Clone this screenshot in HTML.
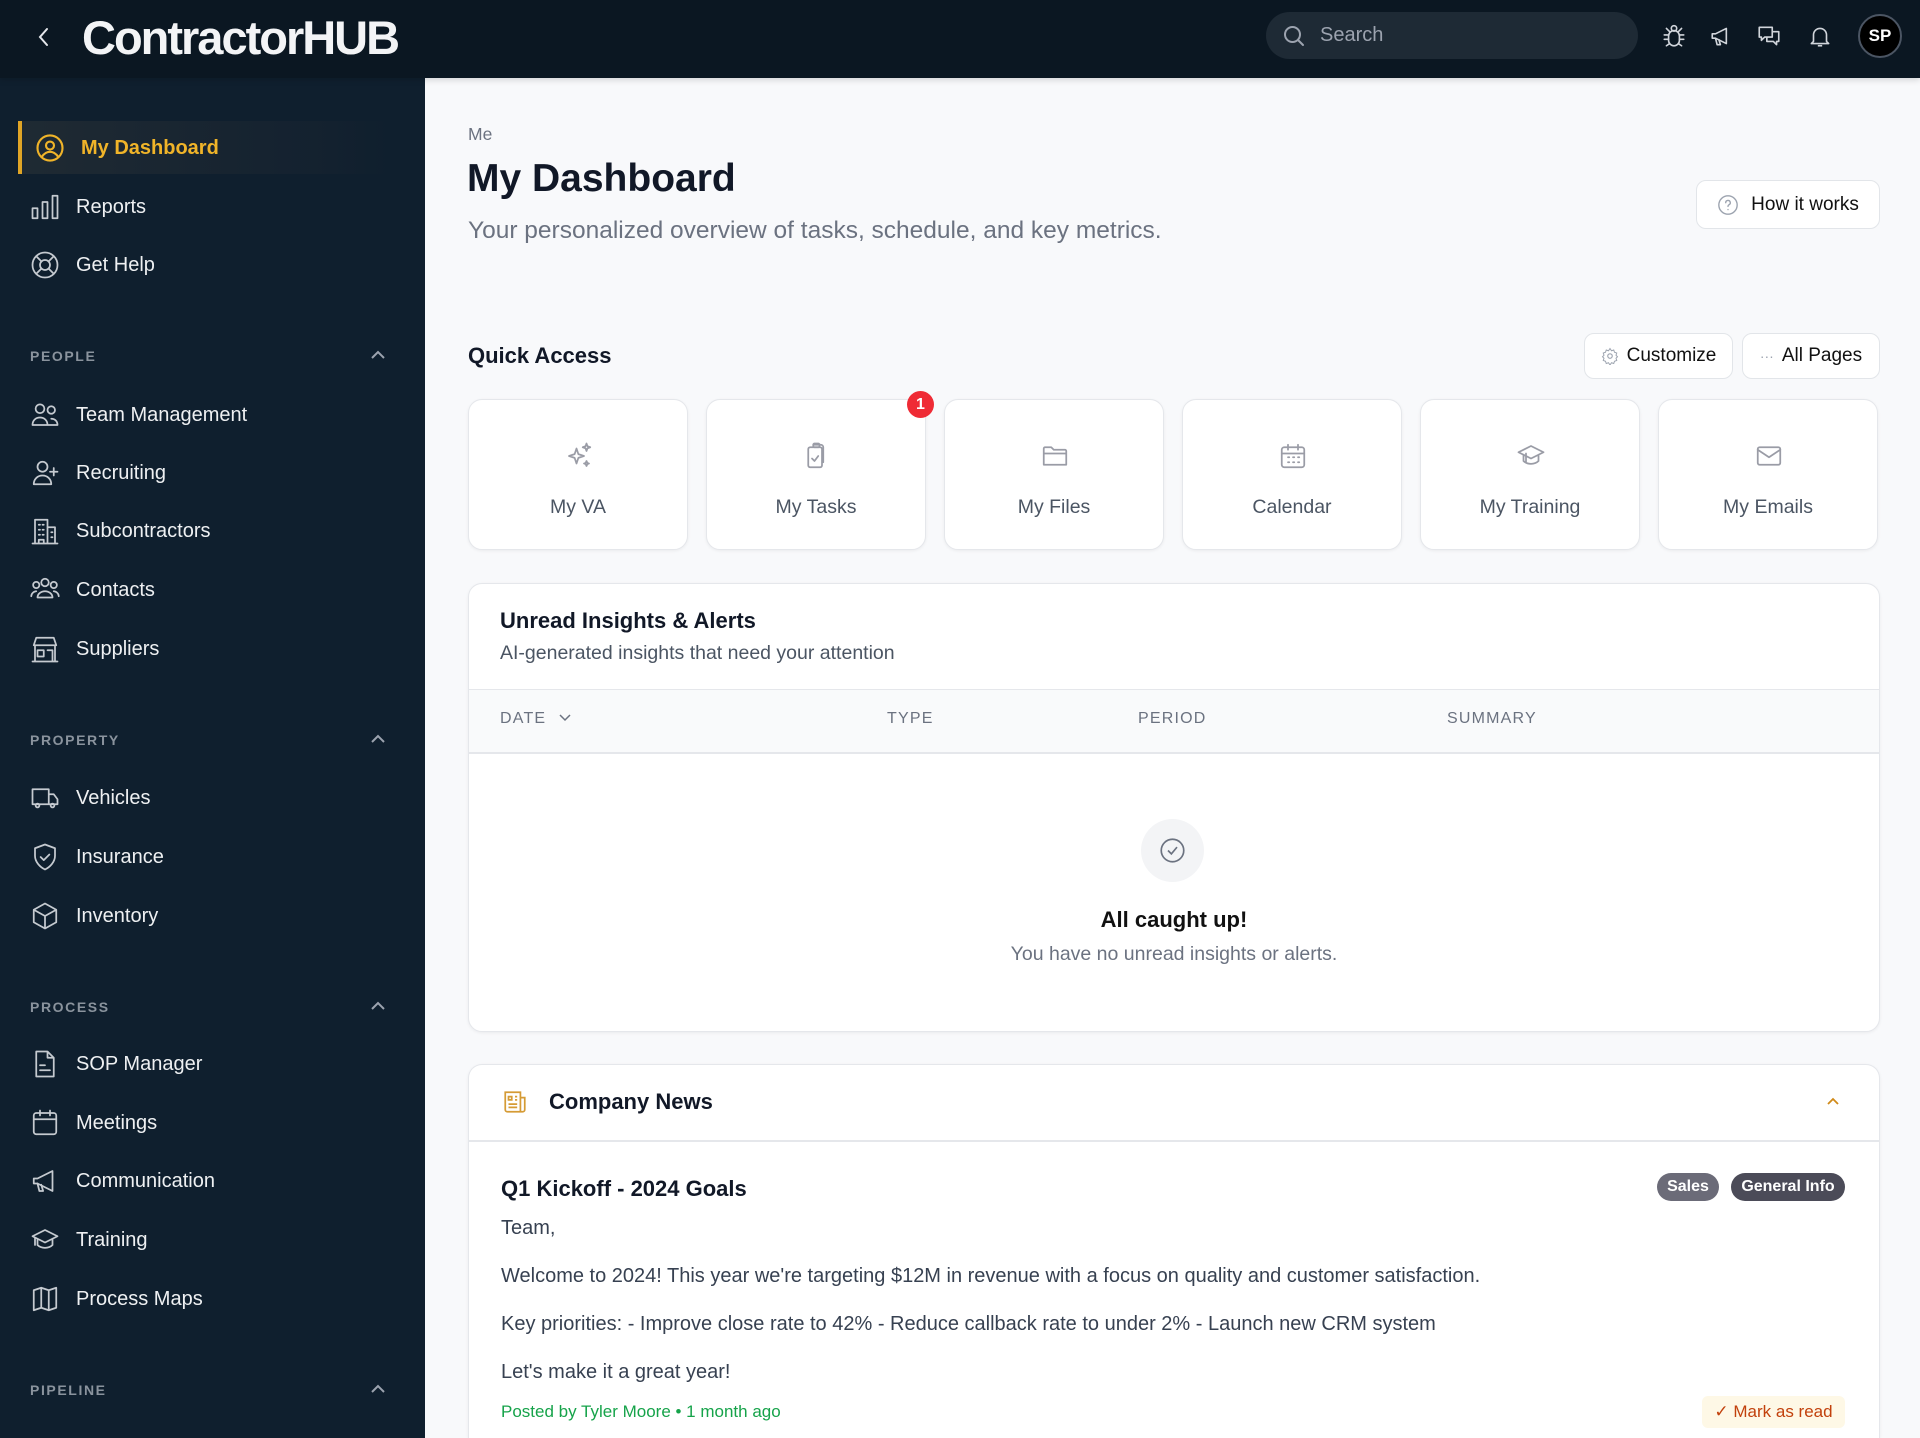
<!DOCTYPE html>
<html style="width:1920px;height:1438px;overflow:hidden"><head><meta charset="utf-8"><style>
*{box-sizing:border-box;margin:0;padding:0}
body{width:1920px;height:1438px;overflow:hidden;background:#f8f9fb;font-family:"Liberation Sans",sans-serif;position:relative;color:#111827}
.a{position:absolute}
.hdr{left:0;top:0;width:1920px;height:78px;background:#0b1722;box-shadow:0 2px 6px rgba(0,0,0,.15);z-index:2}
.side{left:0;top:78px;width:425px;height:1360px;background:#0f1f2e}
.it{position:absolute;left:30px;height:40px;display:flex;align-items:center;color:#eef0f2;font-size:20px}
.it svg{width:30px;height:30px;margin-right:16px;fill:none;stroke:#c5cad0;stroke-width:1.4;stroke-linecap:round;stroke-linejoin:round}
.sec{position:absolute;left:30px;color:#8a939d;font-size:14px;letter-spacing:1.6px;font-weight:bold}
.chev{position:absolute;left:370px;width:16px;height:10px}
.btn{position:absolute;background:#fff;border:1px solid #e2e5e9;border-radius:10px;display:flex;align-items:center;justify-content:center;font-size:19px;color:#111}
.card{position:absolute;background:#fff;border:1px solid #e5e7eb;border-radius:14px;box-shadow:0 1px 3px rgba(0,0,0,.06)}
.qa{position:absolute;top:399px;width:220px;height:151px}
.qa svg{position:absolute;left:95px;top:41px;width:30px;height:30px;fill:none;stroke:#9a9ca6;stroke-width:1.4;stroke-linecap:round;stroke-linejoin:round}
.qa span{position:absolute;left:0;right:0;top:96px;text-align:center;font-size:19.5px;color:#4b5563}
.th{position:absolute;top:710px;font-size:16px;color:#6b7280;letter-spacing:1.2px}
.p{position:absolute;left:501px;font-size:20px;color:#374151}
.tag{position:absolute;top:1173px;height:28px;border-radius:14px;color:#fff;font-size:16px;display:flex;align-items:center;justify-content:center;font-weight:bold}
</style></head><body>
<div class="a hdr">
 <svg class="a" style="left:36px;top:26px" width="16" height="22" viewBox="0 0 16 22"><path d="M11 3 L4 11 L11 19" fill="none" stroke="#e5e7eb" stroke-width="2" stroke-linecap="round"/></svg>
 <div class="a" style="left:82px;top:9px;font-size:47px;font-weight:bold;color:#f3f4f6;letter-spacing:-2px;line-height:58px">Contractor<span style="letter-spacing:-2px">HUB</span></div>
 <div class="a" style="left:1266px;top:12px;width:372px;height:47px;border-radius:24px;background:#1e2a35">
  <svg class="a" style="left:16px;top:12px" width="24" height="24" viewBox="0 0 24 24"><circle cx="10.5" cy="10.5" r="7.5" fill="none" stroke="#9ca3af" stroke-width="2"/><path d="M16 16l5 5" stroke="#9ca3af" stroke-width="2" stroke-linecap="round"/></svg>
  <span class="a" style="left:54px;top:12px;font-size:20px;color:#9ca3af">Search</span>
 </div>
 <svg class="a" style="left:1661px;top:23px" width="26" height="26" viewBox="0 0 24 24" fill="none" stroke="#d1d5db" stroke-width="1.5" stroke-linecap="round"><rect x="7" y="7" width="10" height="14" rx="5"/><circle cx="12" cy="5" r="2.5"/><path d="M7 11H3M17 11h4M7 15H3M17 15h4M8 19l-3 2M16 19l3 2M8 8 5 5M16 8l3-3"/></svg>
 <svg class="a" style="left:1709px;top:23px" width="26" height="26" viewBox="0 0 24 24" fill="none" stroke="#d1d5db" stroke-width="1.5" stroke-linejoin="round"><path d="M3 10v4h3l10 5V5L6 10H3z"/><path d="M6 14l1.5 6h3L9 15"/></svg>
 <svg class="a" style="left:1756px;top:23px" width="26" height="26" viewBox="0 0 24 24" fill="none" stroke="#d1d5db" stroke-width="1.5" stroke-linejoin="round"><path d="M3 4h12v9H8l-3 3v-3H3z"/><path d="M15 8h6v9h-2v3l-3-3h-6v-4"/></svg>
 <svg class="a" style="left:1807px;top:23px" width="26" height="26" viewBox="0 0 24 24" fill="none" stroke="#d1d5db" stroke-width="1.5" stroke-linejoin="round"><path d="M6 17V11a6 6 0 0 1 12 0v6l2 2H4z"/><path d="M10 21h4"/></svg>
 <div class="a" style="left:1858px;top:14px;width:44px;height:44px;border-radius:50%;background:#000;border:2px solid #4b5563;color:#fff;font-weight:bold;font-size:17px;display:flex;align-items:center;justify-content:center">SP</div>
</div>

<div class="a side"></div>
<div class="a" style="left:18px;top:121px;width:370px;height:53px;background:linear-gradient(90deg,#1f2a33,#13212f 85%,#0f1f2e);border-left:4px solid #e0a526"></div>
<div class="it" style="top:128px;left:35px;color:#f0b429;font-weight:bold"><svg viewBox="0 0 24 24" style="stroke:#f0b429;stroke-width:1.7"><circle cx="12" cy="12" r="10"/><circle cx="12" cy="10" r="3.2"/><path d="M5.5 19c2-3 4-4 6.5-4s4.5 1 6.5 4"/></svg>My Dashboard</div>
<div class="it" style="top:187px"><svg viewBox="0 0 24 24"><rect x="2" y="13" width="4" height="8"/><rect x="10" y="8" width="4" height="13"/><rect x="18" y="3" width="4" height="18"/></svg>Reports</div>
<div class="it" style="top:245px"><svg viewBox="0 0 24 24"><circle cx="12" cy="12" r="10"/><circle cx="12" cy="12" r="4"/><path d="M5 5l4 4M19 5l-4 4M5 19l4-4M19 19l-4-4"/></svg>Get Help</div>

<div class="sec" style="top:348px">PEOPLE</div><svg class="chev" style="top:350px" viewBox="0 0 16 10"><path d="M2 8l6-6 6 6" fill="none" stroke="#9ca3af" stroke-width="2"/></svg>
<div class="it" style="top:395px"><svg viewBox="0 0 24 24"><circle cx="8" cy="7" r="3.5"/><circle cx="17" cy="8" r="3"/><path d="M2 20c0-4 3-6 6-6s6 2 6 6zM14 20h8c0-3-2-5-5-5"/></svg>Team Management</div>
<div class="it" style="top:453px"><svg viewBox="0 0 24 24"><circle cx="10" cy="7" r="4"/><path d="M3 21c0-4 3-7 7-7s7 3 7 7zM19 8v6M16 11h6"/></svg>Recruiting</div>
<div class="it" style="top:511px"><svg viewBox="0 0 24 24"><path d="M2 22h20M4 22V3h10v19M14 9h6v13M7 7h1M10 7h1M7 11h1M10 11h1M7 15h1M10 15h1M17 13h1M17 17h1M7 22v-3h4v3"/></svg>Subcontractors</div>
<div class="it" style="top:570px"><svg viewBox="0 0 24 24"><circle cx="12" cy="6" r="3"/><circle cx="5" cy="8" r="2.5"/><circle cx="19" cy="8" r="2.5"/><path d="M6 18c0-3 3-5 6-5s6 2 6 5zM1 17c0-2 2-4 4-4M23 17c0-2-2-4-4-4"/></svg>Contacts</div>
<div class="it" style="top:629px"><svg viewBox="0 0 24 24"><path d="M3 9l2-6h14l2 6zM4 9v13h16V9M2 22h20M6 13h5v5H6zM14 13h4v9"/></svg>Suppliers</div>

<div class="sec" style="top:732px">PROPERTY</div><svg class="chev" style="top:734px" viewBox="0 0 16 10"><path d="M2 8l6-6 6 6" fill="none" stroke="#9ca3af" stroke-width="2"/></svg>
<div class="it" style="top:778px"><svg viewBox="0 0 24 24"><path d="M2 5h13v12H2zM15 9h4l3 4v4h-7"/><circle cx="6" cy="18" r="1.5"/><circle cx="18" cy="18" r="1.5"/></svg>Vehicles</div>
<div class="it" style="top:837px"><svg viewBox="0 0 24 24"><path d="M12 2l8 3v6c0 5-4 9-8 11-4-2-8-6-8-11V5z"/><path d="M8.5 12l2.5 2.5 4.5-4.5"/></svg>Insurance</div>
<div class="it" style="top:896px"><svg viewBox="0 0 24 24"><path d="M12 2l9 5v10l-9 5-9-5V7zM3 7l9 5 9-5M12 12v10"/></svg>Inventory</div>

<div class="sec" style="top:999px">PROCESS</div><svg class="chev" style="top:1001px" viewBox="0 0 16 10"><path d="M2 8l6-6 6 6" fill="none" stroke="#9ca3af" stroke-width="2"/></svg>
<div class="it" style="top:1044px"><svg viewBox="0 0 24 24"><path d="M5 2h9l5 5v15H5zM14 2v5h5M8 17h8M8 13h4"/></svg>SOP Manager</div>
<div class="it" style="top:1103px"><svg viewBox="0 0 24 24"><rect x="3" y="4" width="18" height="17" rx="2"/><path d="M3 9h18M8 2v4M16 2v4"/></svg>Meetings</div>
<div class="it" style="top:1161px"><svg viewBox="0 0 24 24"><path d="M3 10v4h3l12 6V4L6 10H3z"/><path d="M6 14l1.5 6h3L9 15"/></svg>Communication</div>
<div class="it" style="top:1220px"><svg viewBox="0 0 24 24"><path d="M12 4l10 5-10 5-10-5zM6 11v5c3 3 9 3 12 0v-5M4 10v6"/></svg>Training</div>
<div class="it" style="top:1279px"><svg viewBox="0 0 24 24"><path d="M3 5l6-2 6 2 6-2v16l-6 2-6-2-6 2zM9 3v16M15 5v16"/></svg>Process Maps</div>

<div class="sec" style="top:1382px">PIPELINE</div><svg class="chev" style="top:1384px" viewBox="0 0 16 10"><path d="M2 8l6-6 6 6" fill="none" stroke="#9ca3af" stroke-width="2"/></svg>

<!-- main -->
<div class="a" style="left:468px;top:124px;font-size:17.5px;color:#6b7280">Me</div>
<div class="a" style="left:467px;top:157px;font-size:39px;font-weight:bold;color:#111827">My Dashboard</div>
<div class="a" style="left:468px;top:217px;font-size:24.5px;color:#6b7280">Your personalized overview of tasks, schedule, and key metrics.</div>
<div class="btn" style="left:1696px;top:180px;width:184px;height:49px"><svg width="22" height="22" viewBox="0 0 24 24" style="margin-right:12px"><circle cx="12" cy="12" r="10" fill="none" stroke="#9ca3af" stroke-width="1.5"/><path d="M9.5 9.5a2.5 2.5 0 1 1 3.5 2.3c-.7.4-1 1-1 1.7M12 17h.01" fill="none" stroke="#9ca3af" stroke-width="1.5" stroke-linecap="round"/></svg>How it works</div>

<div class="a" style="left:468px;top:343px;font-size:22px;font-weight:bold">Quick Access</div>
<div class="btn" style="left:1584px;top:333px;width:149px;height:46px;font-size:19px"><svg width="18" height="18" viewBox="0 0 24 24" style="margin-right:8px"><circle cx="12" cy="12" r="3" fill="none" stroke="#9ca3af" stroke-width="1.5"/><path d="M12 2l2 3 3-1 1 3 3 1-1 3 2 2-2 2 1 3-3 1-1 3-3-1-2 3-2-3-3 1-1-3-3-1 1-3-2-2 2-2-1-3 3-1 1-3 3 1z" fill="none" stroke="#9ca3af" stroke-width="1.3"/></svg>Customize</div>
<div class="btn" style="left:1742px;top:333px;width:138px;height:46px;font-size:19px"><span style="color:#9ca3af;margin-right:8px;font-size:14px">···</span>All Pages</div>

<div class="card qa" style="left:468px"><svg viewBox="0 0 24 24"><path d="M10 6l1.5 4.5L16 12l-4.5 1.5L10 18l-1.5-4.5L4 12l4.5-1.5zM18 2l.8 2.2L21 5l-2.2.8L18 8l-.8-2.2L15 5l2.2-.8zM18 16l.6 1.4L20 18l-1.4.6L18 20l-.6-1.4L16 18l1.4-.6z"/></svg><span>My VA</span></div>
<div class="card qa" style="left:706px"><svg viewBox="0 0 24 24"><rect x="5" y="5" width="11" height="16" rx="1.5"/><path d="M9 3h6a2 2 0 0 1 2 2v12"/><rect x="9" y="2" width="5" height="3" rx="1"/><path d="M8 14l2 2 3-4"/></svg><span>My Tasks</span></div>
<div class="a" style="left:907px;top:391px;width:27px;height:27px;border-radius:50%;background:#ef2b35;color:#fff;font-size:16px;font-weight:bold;display:flex;align-items:center;justify-content:center;z-index:3">1</div>
<div class="card qa" style="left:944px"><svg viewBox="0 0 24 24"><path d="M3 6a1 1 0 0 1 1-1h5l2 2h9a1 1 0 0 1 1 1v11H3zM3 10h18"/></svg><span>My Files</span></div>
<div class="card qa" style="left:1182px"><svg viewBox="0 0 24 24"><rect x="3" y="5" width="18" height="16" rx="2"/><path d="M3 10h18M8 3v4M16 3v4M8 13h1M12 13h1M16 13h1M8 17h1M12 17h1M16 17h1"/></svg><span>Calendar</span></div>
<div class="card qa" style="left:1420px"><svg viewBox="0 0 24 24"><path d="M12 4l10 5-10 5-10-5zM6 11v5c3 3 9 3 12 0v-5M8 10v7"/></svg><span>My Training</span></div>
<div class="card qa" style="left:1658px"><svg viewBox="0 0 24 24"><rect x="3" y="5" width="18" height="14" rx="1.5"/><path d="M3 7l9 6 9-6"/></svg><span>My Emails</span></div>

<div class="card" style="left:468px;top:583px;width:1412px;height:449px;overflow:hidden">
 <div class="a" style="left:31px;top:24px;font-size:22px;font-weight:bold">Unread Insights &amp; Alerts</div>
 <div class="a" style="left:31px;top:58px;font-size:19.5px;color:#4b5563">AI-generated insights that need your attention</div>
 <div class="a" style="left:0;top:105px;width:1412px;height:65px;background:#f9fafb;border-top:1px solid #e5e7eb;border-bottom:2px solid #e5e7eb"></div>
</div>
<div class="th" style="left:500px">DATE <svg width="14" height="10" viewBox="0 0 14 10" style="margin-left:6px"><path d="M2 2l5 5 5-5" fill="none" stroke="#6b7280" stroke-width="1.5"/></svg></div>
<div class="th" style="left:887px">TYPE</div>
<div class="th" style="left:1138px">PERIOD</div>
<div class="th" style="left:1447px">SUMMARY</div>
<div class="a" style="left:1141px;top:819px;width:63px;height:63px;border-radius:50%;background:#f3f4f6"></div>
<svg class="a" style="left:1159px;top:837px" width="27" height="27" viewBox="0 0 24 24"><circle cx="12" cy="12" r="10" fill="none" stroke="#6b7280" stroke-width="1.5"/><path d="M8 12l3 3 5-6" fill="none" stroke="#6b7280" stroke-width="1.5"/></svg>
<div class="a" style="left:468px;width:1412px;top:907px;text-align:center;font-size:22px;font-weight:bold;color:#111">All caught up!</div>
<div class="a" style="left:468px;width:1412px;top:943px;text-align:center;font-size:19.5px;color:#6b7280">You have no unread insights or alerts.</div>

<div class="card" style="left:468px;top:1064px;width:1412px;height:374px;border-bottom:none;border-radius:14px 14px 0 0">
 <div class="a" style="left:0;top:75px;width:1410px;border-top:2px solid #e5e7eb"></div>
</div>
<svg class="a" style="left:502px;top:1089px" width="26" height="26" viewBox="0 0 24 24" fill="none" stroke="#d59b35" stroke-width="1.6"><path d="M3 3h14v18H5a2 2 0 0 1-2-2zM17 8h4v11a2 2 0 0 1-2 2h-2M6 7h3v3H6zM12 7h2M12 10h2M6 14h8M6 17h8"/></svg>
<div class="a" style="left:549px;top:1089px;font-size:22px;font-weight:bold;color:#111827">Company News</div>
<svg class="a" style="left:1826px;top:1096px" width="14" height="10" viewBox="0 0 14 10"><path d="M2 8l5-5 5 5" fill="none" stroke="#d08a1a" stroke-width="1.8"/></svg>
<div class="a" style="left:501px;top:1176px;font-size:22px;font-weight:bold;color:#111827">Q1 Kickoff - 2024 Goals</div>
<div class="tag" style="left:1657px;width:62px;background:#6b6b78">Sales</div>
<div class="tag" style="left:1731px;width:114px;background:#4b4b58">General Info</div>
<div class="p" style="top:1217px">Team,</div>
<div class="p" style="top:1265px">Welcome to 2024! This year we're targeting $12M in revenue with a focus on quality and customer satisfaction.</div>
<div class="p" style="top:1313px">Key priorities: - Improve close rate to 42% - Reduce callback rate to under 2% - Launch new CRM system</div>
<div class="p" style="top:1361px">Let's make it a great year!</div>
<div class="a" style="left:501px;top:1402px;font-size:17px;color:#16a34a">Posted by Tyler Moore • 1 month ago</div>
<div class="a" style="left:1702px;top:1396px;width:143px;height:32px;border-radius:6px;background:#fef8e6;color:#c2410c;font-size:17px;display:flex;align-items:center;justify-content:center">✓ Mark as read</div>
</body></html>
